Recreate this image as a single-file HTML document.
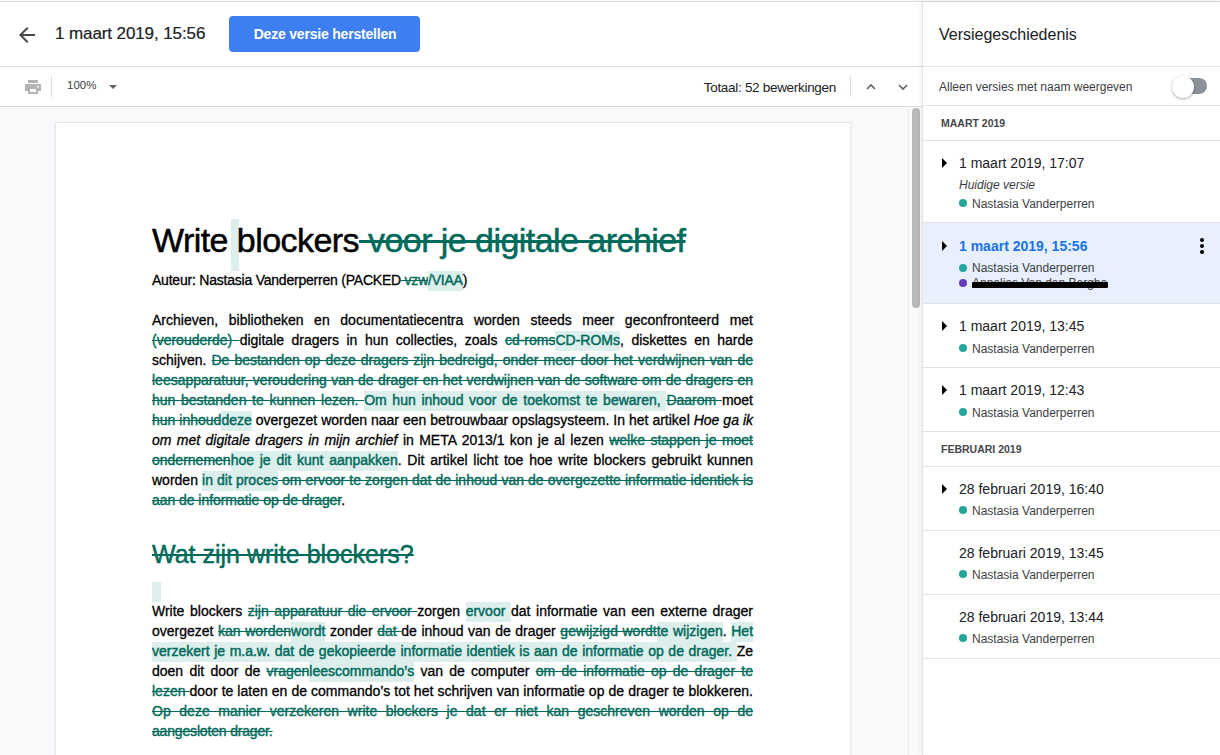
<!DOCTYPE html>
<html><head><meta charset="utf-8">
<style>
*{margin:0;padding:0;box-sizing:border-box}
html,body{width:1220px;height:755px;overflow:hidden;background:#fff;font-family:"Liberation Sans",sans-serif;color:#202124}
.abs{position:absolute;line-height:1;white-space:nowrap}
#topline{left:0;top:0;width:1220px;height:2px;background:#f7f7f9;border-bottom:1px solid #dcdcdc}
#header{left:0;top:2px;width:922px;height:65px;background:#fff;border-bottom:1px solid #dadce0}
#toolbar{left:0;top:67px;width:922px;height:40px;background:#fff;border-bottom:1px solid #dadce0}
#docarea{left:0;top:107px;width:922px;height:648px;background:#f8f9fa}
#page{left:56px;top:123px;width:794px;height:700px;background:#fff;box-shadow:0 0 0 1px #e4e6e9, 0 1px 3px rgba(60,64,67,.2)}
#scroll{left:912px;top:108px;width:8px;height:200px;background:#b8b8b8;border-radius:4px}
#side{left:922px;top:2px;width:298px;height:753px;background:#fff;border-left:1px solid #e3e3e3;box-shadow:-1px 0 5px rgba(0,0,0,.07)}
#track{left:908px;top:107px;width:14px;height:648px;background:#fafafa;border-left:1px solid #ececec}
.title{left:55px;top:23px;font-size:17px;letter-spacing:-0.1px;-webkit-text-stroke:0.2px currentColor;color:#202124;white-space:nowrap}
.btn{left:229px;top:14px;width:191px;height:36px;background:#3d7ff1;border-radius:4px;color:#fff;font-weight:bold;font-size:14px;letter-spacing:-0.2px;text-align:center;line-height:36px;padding-left:1px}
.doc{font-family:"Liberation Sans",sans-serif;color:#000}
.ln{position:absolute;left:152px;width:601px;font-size:14px;line-height:20px;white-space:nowrap;color:#000;-webkit-text-stroke:0.3px currentColor}
.j{text-align:justify;text-align-last:justify;white-space:normal}
.d{color:#006a5b;text-decoration:line-through;-webkit-text-stroke:0.4px currentColor}
.i{color:#006a5b;background:#ddefed}
.it{font-style:italic}
.ttl{position:absolute;left:152px;font-size:34px;line-height:1;letter-spacing:-0.55px;white-space:nowrap;color:#000;-webkit-text-stroke:0.5px currentColor}
.hd{position:absolute;left:152px;font-size:25px;line-height:1;white-space:nowrap;-webkit-text-stroke:0.45px currentColor}
.i{padding:1.4px 0 2.5px;-webkit-text-stroke:0.45px currentColor}
.ttl .d{-webkit-text-stroke:0.5px currentColor}
.hd .d{-webkit-text-stroke:0.45px currentColor}
.si{position:absolute;left:0;width:298px;border-bottom:1px solid #e0e0e0}
.tri{position:absolute;left:21px;width:0;height:0;border-top:5px solid transparent;border-bottom:5px solid transparent;border-left:5px solid #000}
.dt{position:absolute;left:36px;font-size:14px;color:#202124;white-space:nowrap}
.nm{position:absolute;left:48px;font-size:12px;color:#3c4043;white-space:nowrap}
.dot{position:absolute;left:36px;width:8px;height:8px;border-radius:50%;background:#26a69a}
.mh{position:absolute;left:19px;font-size:11px;font-weight:bold;color:#3c4043;white-space:nowrap}
</style></head><body>
<div class="abs" id="topline"></div>
<div class="abs" id="header">
  <svg class="abs" style="left:19px;top:25px" width="16" height="16" viewBox="0 0 16 16"><path d="M16 7H3.83l5.59-5.59L8 0 0 8l8 8 1.41-1.41L3.83 9H16z" fill="#44474b"/></svg>
  <div class="abs title">1 maart 2019, 15:56</div>
  <div class="abs btn">Deze versie herstellen</div>
</div>
<div class="abs" id="toolbar">
  <svg class="abs" style="left:25px;top:13px" width="16" height="14" viewBox="0 0 16 14"><path d="M3 0h10v3H3z M1 4h14a1 1 0 0 1 1 1v6h-3v3H3v-3H0V5a1 1 0 0 1 1-1z M5 9v3h6V9z M12 6h2v1.5h-2z" fill="#b3b3b3" fill-rule="evenodd"/></svg>
  <div class="abs" style="left:51px;top:9px;width:1px;height:21px;background:#dadce0"></div>
  <div class="abs" style="left:67px;top:13px;font-size:11.5px;color:#3c4043">100%</div>
  <div class="abs" style="left:109px;top:18px;width:0;height:0;border-left:4px solid transparent;border-right:4px solid transparent;border-top:4px solid #5f6368"></div>
  <div class="abs" style="left:640px;top:14px;width:196px;text-align:right;font-size:13.5px;letter-spacing:-0.3px;color:#202124">Totaal: 52 bewerkingen</div>
  <div class="abs" style="left:850px;top:9px;width:1px;height:21px;background:#dadce0"></div>
  <svg class="abs" style="left:866px;top:16px" width="10" height="7" viewBox="0 0 10 7"><path d="M1 6l4-4 4 4" stroke="#5f6368" stroke-width="1.6" fill="none"/></svg>
  <svg class="abs" style="left:898px;top:17px" width="10" height="7" viewBox="0 0 10 7"><path d="M1 1l4 4 4-4" stroke="#5f6368" stroke-width="1.6" fill="none"/></svg>
</div>
<div class="abs" id="docarea"></div>
<div class="abs" id="page"></div>
<div class="abs" id="track"></div>
<div class="abs" id="scroll"></div>
<!--DOC-->
<div class="abs" id="hl1" style="left:231px;top:219px;width:8px;height:52px;background:#ddefed"></div>
<div class="ttl" style="top:223.02px">Write blockers<span class="d"> voor je digitale archief</span></div>
<div class="ln" style="top:270px;letter-spacing:-0.22px">Auteur: Nastasia Vanderperren (PACKED<span class="d"> vzw</span><span class="i">/VIAA</span>)</div>
<div class="ln j" style="top:310px">Archieven, bibliotheken en documentatiecentra worden steeds meer geconfronteerd met</div>
<div class="ln j" style="top:330px"><span class="d">(verouderde) </span>digitale dragers in hun collecties, zoals <span class="d">cd-roms</span><span class="i">CD-ROMs</span>, diskettes en harde</div>
<div class="ln j" style="top:350px">schijven. <span class="d">De bestanden op deze dragers zijn bedreigd, onder meer door het verdwijnen van de</span></div>
<div class="ln j" style="top:370px"><span class="d">leesapparatuur, veroudering van de drager en het verdwijnen van de software om de dragers en</span></div>
<div class="ln j" style="top:390px"><span class="d">hun bestanden te kunnen lezen. </span><span class="i">Om hun inhoud voor de toekomst te bewaren, </span><span class="d">Daarom </span>moet</div>
<div class="ln j" style="top:410px"><span class="d">hun inhoud</span><span class="i">deze</span> overgezet worden naar een betrouwbaar opslagsysteem. In het artikel <span class="it">Hoe ga ik</span></div>
<div class="ln j" style="top:430px"><span class="it">om met digitale dragers in mijn archief</span> in META 2013/1 kon je al lezen <span class="d">welke stappen je moet</span></div>
<div class="ln j" style="top:450px"><span class="d">ondernemen</span><span class="i">hoe je dit kunt aanpakken</span>. Dit artikel licht toe hoe write blockers gebruikt kunnen</div>
<div class="ln j" style="top:470px">worden <span class="i">in dit proces</span><span class="d"> om ervoor te zorgen dat de inhoud van de overgezette informatie identiek is</span></div>
<div class="ln" style="top:490px;letter-spacing:-0.05px"><span class="d">aan de informatie op de drager</span>.</div>
<div class="hd" style="top:542.04px"><span class="d">Wat zijn write blockers?</span></div>
<div class="abs" style="left:152px;top:582px;width:9px;height:20px;background:#ddefed"></div>
<div class="ln j" style="top:601px">Write blockers <span class="d">zijn apparatuur die ervoor </span>zorgen <span class="i">ervoor </span>dat informatie van een externe drager</div>
<div class="ln j" style="top:621px">overgezet <span class="d">kan worden</span><span class="i">wordt</span> zonder <span class="d">dat </span>de inhoud van de drager <span class="d">gewijzigd wordt</span><span class="i">te wijzigen</span>. <span class="i">Het</span></div>
<div class="ln j" style="top:641px"><span class="i">verzekert je m.a.w. dat de gekopieerde informatie identiek is aan de informatie op de drager. </span>Ze</div>
<div class="ln j" style="top:661px">doen dit door de <span class="d">vragen</span><span class="i">leescommando’s</span> van de computer <span class="d">om de informatie op de drager te</span></div>
<div class="ln j" style="top:681px"><span class="d">lezen </span>door te laten en de commando’s tot het schrijven van informatie op de drager te blokkeren.</div>
<div class="ln j" style="top:701px"><span class="d">Op deze manier verzekeren write blockers je dat er niet kan geschreven worden op de</span></div>
<div class="ln" style="top:721px;letter-spacing:-0.17px"><span class="d">aangesloten drager.</span></div>
<!--/DOC-->

<div class="abs" id="side"></div>
<!--SIDE-->
<div class="abs" style="left:939px;top:27.2px;font-size:16px;color:#202124">Versiegeschiedenis</div>
<div class="abs" style="left:923px;top:66px;width:297px;height:1px;background:#dfe1e5"></div>
<div class="abs" style="left:939px;top:81.1px;font-size:12px;color:#3c4043">Alleen versies met naam weergeven</div>
<div class="abs" style="left:923px;top:105px;width:297px;height:1px;background:#dfe1e5"></div>
<div class="abs" style="left:941px;top:118.1px;font-size:10.5px;font-weight:bold;color:#44474b">MAART 2019</div>
<div class="abs" style="left:923px;top:140px;width:297px;height:1px;background:#dfe1e5"></div>
<div class="abs tri" style="left:942px;top:158px"></div>
<div class="abs" style="left:959px;top:155.9px;font-size:14px;">1 maart 2019, 17:07</div>
<div class="abs" style="left:959px;top:178.6px;font-size:12px;font-style:italic;color:#3c4043">Huidige versie</div>
<div class="abs dot" style="left:959px;top:199px;background:#26a69a"></div>
<div class="abs" style="left:972px;top:198.2px;font-size:12px;color:#3c4043">Nastasia Vanderperren</div>
<div class="abs" style="left:923px;top:222px;width:297px;height:1px;background:#dfe1e5"></div>
<div class="abs" style="left:923px;top:223px;width:297px;height:80px;background:#e8f0fe"></div>
<div class="abs tri" style="left:942px;top:241px"></div>
<div class="abs" style="left:959px;top:239.1px;font-size:14px;font-weight:bold;color:#1a73e8">1 maart 2019, 15:56</div>
<div class="abs dot" style="left:959px;top:264px;background:#26a69a"></div>
<div class="abs" style="left:972px;top:262.0px;font-size:12px;color:#3c4043">Nastasia Vanderperren</div>
<div class="abs dot" style="left:959px;top:279px;background:#673ab7"></div>
<div class="abs" style="left:972px;top:276.8px;font-size:12px;color:#3c4043">Annelies Van den Berghe</div>
<div class="abs" style="left:972px;top:282px;width:136px;height:6px;background:#000;border-radius:1px"></div>
<div class="abs" style="left:1200px;top:238px;width:4px;height:4px;border-radius:50%;background:#000"></div>
<div class="abs" style="left:1200px;top:244px;width:4px;height:4px;border-radius:50%;background:#000"></div>
<div class="abs" style="left:1200px;top:250px;width:4px;height:4px;border-radius:50%;background:#000"></div>
<div class="abs" style="left:923px;top:303px;width:297px;height:1px;background:#dfe1e5"></div>
<div class="abs tri" style="left:942px;top:321px"></div>
<div class="abs" style="left:959px;top:319.1px;font-size:14px;">1 maart 2019, 13:45</div>
<div class="abs dot" style="left:959px;top:344px;background:#26a69a"></div>
<div class="abs" style="left:972px;top:343.1px;font-size:12px;color:#3c4043">Nastasia Vanderperren</div>
<div class="abs" style="left:923px;top:367px;width:297px;height:1px;background:#dfe1e5"></div>
<div class="abs tri" style="left:942px;top:385px"></div>
<div class="abs" style="left:959px;top:383.1px;font-size:14px;">1 maart 2019, 12:43</div>
<div class="abs dot" style="left:959px;top:408px;background:#26a69a"></div>
<div class="abs" style="left:972px;top:407.1px;font-size:12px;color:#3c4043">Nastasia Vanderperren</div>
<div class="abs" style="left:923px;top:431px;width:297px;height:1px;background:#dfe1e5"></div>
<div class="abs" style="left:941px;top:444.1px;font-size:10.5px;font-weight:bold;color:#44474b">FEBRUARI 2019</div>
<div class="abs" style="left:923px;top:466px;width:297px;height:1px;background:#dfe1e5"></div>
<div class="abs tri" style="left:942px;top:484px"></div>
<div class="abs" style="left:959px;top:482.1px;font-size:14px;">28 februari 2019, 16:40</div>
<div class="abs dot" style="left:959px;top:506px;background:#26a69a"></div>
<div class="abs" style="left:972px;top:505.0px;font-size:12px;color:#3c4043">Nastasia Vanderperren</div>
<div class="abs" style="left:923px;top:530px;width:297px;height:1px;background:#dfe1e5"></div>
<div class="abs" style="left:959px;top:546.1px;font-size:14px;">28 februari 2019, 13:45</div>
<div class="abs dot" style="left:959px;top:570px;background:#26a69a"></div>
<div class="abs" style="left:972px;top:569.0px;font-size:12px;color:#3c4043">Nastasia Vanderperren</div>
<div class="abs" style="left:923px;top:594px;width:297px;height:1px;background:#dfe1e5"></div>
<div class="abs" style="left:959px;top:610.1px;font-size:14px;">28 februari 2019, 13:44</div>
<div class="abs dot" style="left:959px;top:634px;background:#26a69a"></div>
<div class="abs" style="left:972px;top:633.0px;font-size:12px;color:#3c4043">Nastasia Vanderperren</div>
<div class="abs" style="left:923px;top:658px;width:297px;height:1px;background:#dfe1e5"></div>
<div class="abs" style="left:1176px;top:78px;width:31px;height:16px;border-radius:8px;background:#8a9199"></div>
<div class="abs" style="left:1172px;top:76px;width:22px;height:22px;border-radius:50%;background:#fff;box-shadow:0 1px 3px rgba(0,0,0,.35)"></div>
<!--/SIDE-->
</body></html>
